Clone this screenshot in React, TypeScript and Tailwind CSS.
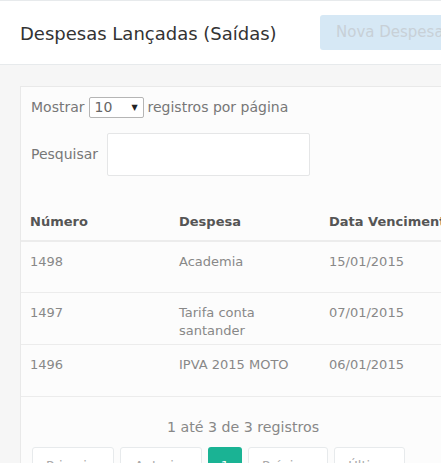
import React from "react";

const rows = [
  { numero: "1498", despesa: "Academia", data: "15/01/2015", h: "h-[51px]" },
  { numero: "1497", despesa: "Tarifa conta santander", data: "07/01/2015", h: "h-[52px]" },
  { numero: "1496", despesa: "IPVA 2015 MOTO", data: "06/01/2015", h: "h-[52px]" },
];

const pages = [
  { label: "Primeiro", w: "w-[82px]" },
  { label: "Anterior", w: "w-[82px]" },
  { label: "1", w: "w-[34px]" },
  { label: "Próximo", w: "w-[80px]" },
  { label: "Último", w: "w-[71px]" },
];

export default function App() {
  return (
    <div
      className="w-[441px] h-[463px] overflow-hidden bg-[#f6f6f6]"
      style={{ fontFamily: '"DejaVu Sans", Verdana, sans-serif' }}
    >
      <div className="w-[640px]">
        {/* Header */}
        <div className="h-[65px] bg-white border-t border-b border-[#e7eaec] flex items-center pl-[20px]">
          <h2 className="text-[18px] text-[#333] w-[300px] mt-[1px]">Despesas Lançadas (Saídas)</h2>
          <button className="h-[35px] px-[16px] rounded-[3px] bg-[#d6e8f5] text-[15px] text-[#c8d0d7]">
            Nova Despesa
          </button>
        </div>

        {/* Card */}
        <div className="ml-[20px] mt-[21px] bg-[#fcfcfc] border-t border-l border-[#e9e9e9] pt-[10px] pl-[10px] text-[14px] text-[#777]">
          <div className="flex items-center gap-[4px] h-[21px]">
            <span>Mostrar</span>
            <div className="w-[55px] h-[21px] border border-[#b5b5b5] rounded-[2px] bg-white flex items-center justify-between px-[5px] text-[14px] text-[#666]">
              <span>10</span>
              <span className="text-[8px] text-[#222]">▼</span>
            </div>
            <span>registros por página</span>
          </div>

          <div className="flex items-center mt-[15px] h-[43px]">
            <span className="w-[76px]">Pesquisar</span>
            <div className="w-[203px] h-[43px] bg-white border border-[#e5e6e7] rounded-[2px]" />
          </div>

          {/* Table */}
          <div className="mt-[36px] -ml-[10px] text-[13px]">
            <div className="flex h-[30px] border-b-2 border-[#ececec] font-bold text-[#555] items-start">
              <div className="w-[149px] pl-[9px]">Número</div>
              <div className="w-[150px] pl-[9px]">Despesa</div>
              <div className="w-[200px] pl-[9px] whitespace-nowrap">Data Vencimento</div>
            </div>
            {rows.map((r) => (
              <div
                key={r.numero}
                className={`flex ${r.h} border-b border-[#ececec] items-start pt-[11px] leading-[18px] text-[#888]`}
              >
                <div className="w-[149px] pl-[9px]">{r.numero}</div>
                <div className="w-[150px] pl-[9px] pr-[30px]">{r.despesa}</div>
                <div className="w-[200px] pl-[9px]">{r.data}</div>
              </div>
            ))}
          </div>

          {/* Footer */}
          <div className="pl-[136px] mt-[20px] text-[14.2px] text-[#888]">1 até 3 de 3 registros</div>
          <div className="flex gap-[6px] mt-[9px] ml-[1px]">
            {pages.map((p) =>
              p.label === "1" ? (
                <div
                  key={p.label}
                  className={`${p.w} h-[36px] rounded-[3px] bg-[#1ab394] text-white flex items-center justify-center text-[13px]`}
                >
                  {p.label}
                </div>
              ) : (
                <div
                  key={p.label}
                  className={`${p.w} h-[36px] rounded-[3px] bg-white border border-[#e7eaec] text-[#aaa] flex items-center justify-center text-[13px]`}
                >
                  {p.label}
                </div>
              )
            )}
          </div>
        </div>
      </div>
    </div>
  );
}
